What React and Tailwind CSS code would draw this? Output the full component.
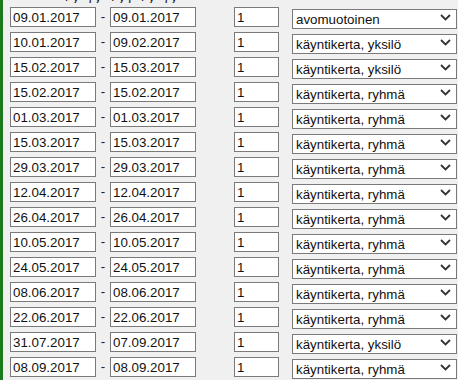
import React from "react";

const rows = [
  ["09.01.2017", "09.01.2017", "1", "avomuotoinen"],
  ["10.01.2017", "09.02.2017", "1", "käyntikerta, yksilö"],
  ["15.02.2017", "15.03.2017", "1", "käyntikerta, yksilö"],
  ["15.02.2017", "15.02.2017", "1", "käyntikerta, ryhmä"],
  ["01.03.2017", "01.03.2017", "1", "käyntikerta, ryhmä"],
  ["15.03.2017", "15.03.2017", "1", "käyntikerta, ryhmä"],
  ["29.03.2017", "29.03.2017", "1", "käyntikerta, ryhmä"],
  ["12.04.2017", "12.04.2017", "1", "käyntikerta, ryhmä"],
  ["26.04.2017", "26.04.2017", "1", "käyntikerta, ryhmä"],
  ["10.05.2017", "10.05.2017", "1", "käyntikerta, ryhmä"],
  ["24.05.2017", "24.05.2017", "1", "käyntikerta, ryhmä"],
  ["08.06.2017", "08.06.2017", "1", "käyntikerta, ryhmä"],
  ["22.06.2017", "22.06.2017", "1", "käyntikerta, ryhmä"],
  ["31.07.2017", "07.09.2017", "1", "käyntikerta, yksilö"],
  ["08.09.2017", "08.09.2017", "1", "käyntikerta, ryhmä"],
];

const options = ["avomuotoinen", "käyntikerta, yksilö", "käyntikerta, ryhmä"];

function Field({ value, width }) {
  return (
    <input
      type="text"
      defaultValue={value}
      className={`${width} h-[20px] border border-[#7a7a7a] bg-white px-[2px] text-[13.33px] text-[#111] outline-none`}
    />
  );
}

function Chevron() {
  return (
    <svg width="11" height="7" viewBox="0 0 11 7" className="pointer-events-none absolute right-[6px] top-[7px]">
      <path d="M1 1 L5.5 5.5 L10 1" fill="none" stroke="#333" strokeWidth="1.8" />
    </svg>
  );
}

function Row({ from, to, count, kind }) {
  return (
    <div className="flex h-[20px] items-center">
      <Field value={from} width="w-[86px]" />
      <span className="w-[14px] text-center text-[13.33px] text-[#222]">-</span>
      <Field value={to} width="w-[86px]" />
      <div className="w-[38px]" />
      <Field value={count} width="w-[45px]" />
      <div className="w-[13px]" />
      <div className="relative h-[20px] w-[165px]">
        <select
          defaultValue={kind}
          className="h-full w-full appearance-none border border-[#7a7a7a] bg-white pl-[3px] text-[13.33px] text-[#111] outline-none"
        >
          {options.map((o) => (
            <option key={o}>{o}</option>
          ))}
        </select>
        <Chevron />
      </div>
    </div>
  );
}

export default function App() {
  return (
    <div
      className="h-[380px] w-[458px] overflow-hidden border-l-[3px] border-[#1b7a1b] bg-[#f0f0f0] pl-[7px]"
      style={{ fontFamily: '"Liberation Sans", Arial, sans-serif' }}
    >
      <div className="h-[3px] overflow-hidden pl-[55px] text-[13.33px] text-[#222]">
        <div className="-mt-[11px] leading-[15px] tracking-[3px]">ry jy ryj ry jy</div>
      </div>
      <div className="mt-[4px] flex flex-col gap-[5px]">
        {rows.map((r, i) => (
          <Row key={i} from={r[0]} to={r[1]} count={r[2]} kind={r[3]} />
        ))}
      </div>
    </div>
  );
}
